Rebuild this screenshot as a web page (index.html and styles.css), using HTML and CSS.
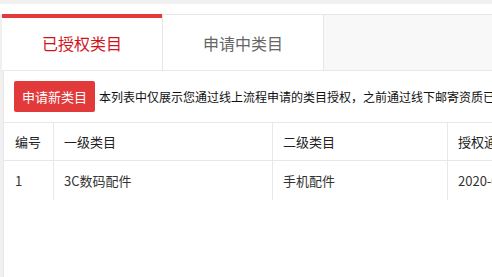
FILE: index.html
```html
<!DOCTYPE html>
<html lang="zh-CN">
<head>
<meta charset="utf-8">
<title>类目管理</title>
<link rel="stylesheet" href="styles.css">
</head>
<body>
<div class="topbar"></div>
<div class="main">
  <div class="tabs">
    <div class="tab tab-active">已授权类目</div>
    <div class="tab tab-normal">申请中类目</div>
    <div class="tab-rest"></div>
  </div>
  <div class="content">
    <div class="toolbar">
      <button class="btn">申请新类目</button>
      <span class="desc">本列表中仅展示您通过线上流程申请的类目授权，之前通过线下邮寄资质已获得授权的类目不在此列表中展示</span>
    </div>
    <table class="grid">
      <colgroup>
        <col class="c1"><col class="c2"><col class="c3"><col class="c4">
      </colgroup>
      <thead>
        <tr><th>编号</th><th>一级类目</th><th>二级类目</th><th>授权通过时间</th></tr>
      </thead>
      <tbody>
        <tr><td>1</td><td>3C数码配件</td><td>手机配件</td><td>2020-03-12 10:25:36</td></tr>
      </tbody>
    </table>
  </div>
</div>
</body>
</html>
```
FILE: styles.css
```css
html, body {
  margin: 0;
  padding: 0;
}
body {
  background: #f0f0f0;
  font-family: "Noto Sans CJK SC", "Microsoft YaHei", sans-serif;
  width: 492px;
  height: 277px;
  overflow: hidden;
}
.topbar {
  height: 10px;
  border-top: 4px solid #f0f0f0;
  background: #fff;
}
.main {
  padding-left: 2px;
  background: #f0f0f0;
  height: 263px;
  display: flex;
  flex-direction: column;
}
.tabs {
  display: flex;
  height: 56px;
}
.tab {
  width: 160px;
  box-sizing: border-box;
  background: #fff;
  display: flex;
  align-items: center;
  justify-content: center;
  font-size: 16px;
}
.tab-active {
  border-top: 4px solid #e23a3a;
  color: #d0141b;
  padding-bottom: 2px;
}
.tab-normal {
  width: 162px;
  border-top: 1px solid #e6e6e6;
  border-left: 1px solid #e6e6e6;
  border-right: 1px solid #e6e6e6;
  color: #666;
  padding-top: 1px;
}
.tab-rest {
  flex: 1;
  background: #f8f8f8;
  border-top: 1px solid #e6e6e6;
}
.content {
  flex: 1;
  margin-left: 1px;
  background: #fff;
  border-top: 1px solid #e8e8e8;
  border-left: 1px solid #e8e8e8;
  overflow: hidden;
}
.toolbar {
  display: flex;
  align-items: center;
  padding: 10px 0 10px 10px;
  white-space: nowrap;
}
.btn {
  height: 31px;
  padding: 0 8px;
  border: none;
  border-radius: 2px;
  background: #e2393b;
  color: #fff;
  font-family: inherit;
  font-size: 13px;
  flex-shrink: 0;
}
.desc {
  margin-left: 4px;
  font-size: 12px;
  color: #111;
}
.grid {
  margin-left: -1px;
  width: 720px;
  table-layout: fixed;
  border-collapse: collapse;
  font-size: 13px;
  color: #333;
}
.c1 { width: 50px; }
.c2 { width: 219px; }
.c3 { width: 175px; }
.c4 { width: 276px; }
.grid th,
.grid td {
  text-align: left;
  font-weight: normal;
  padding: 0 10px;
  border-left: 1px solid #e8e8e8;
  border-right: 1px solid #e8e8e8;
  white-space: nowrap;
  overflow: hidden;
}
.grid th {
  height: 37px;
  border-top: 1px solid #e8e8e8;
  border-bottom: 1px solid #e8e8e8;
  color: #222;
}
.grid td {
  height: 39px;
}
.grid th:first-child,
.grid td:first-child {
  padding-left: 11px;
}
```
